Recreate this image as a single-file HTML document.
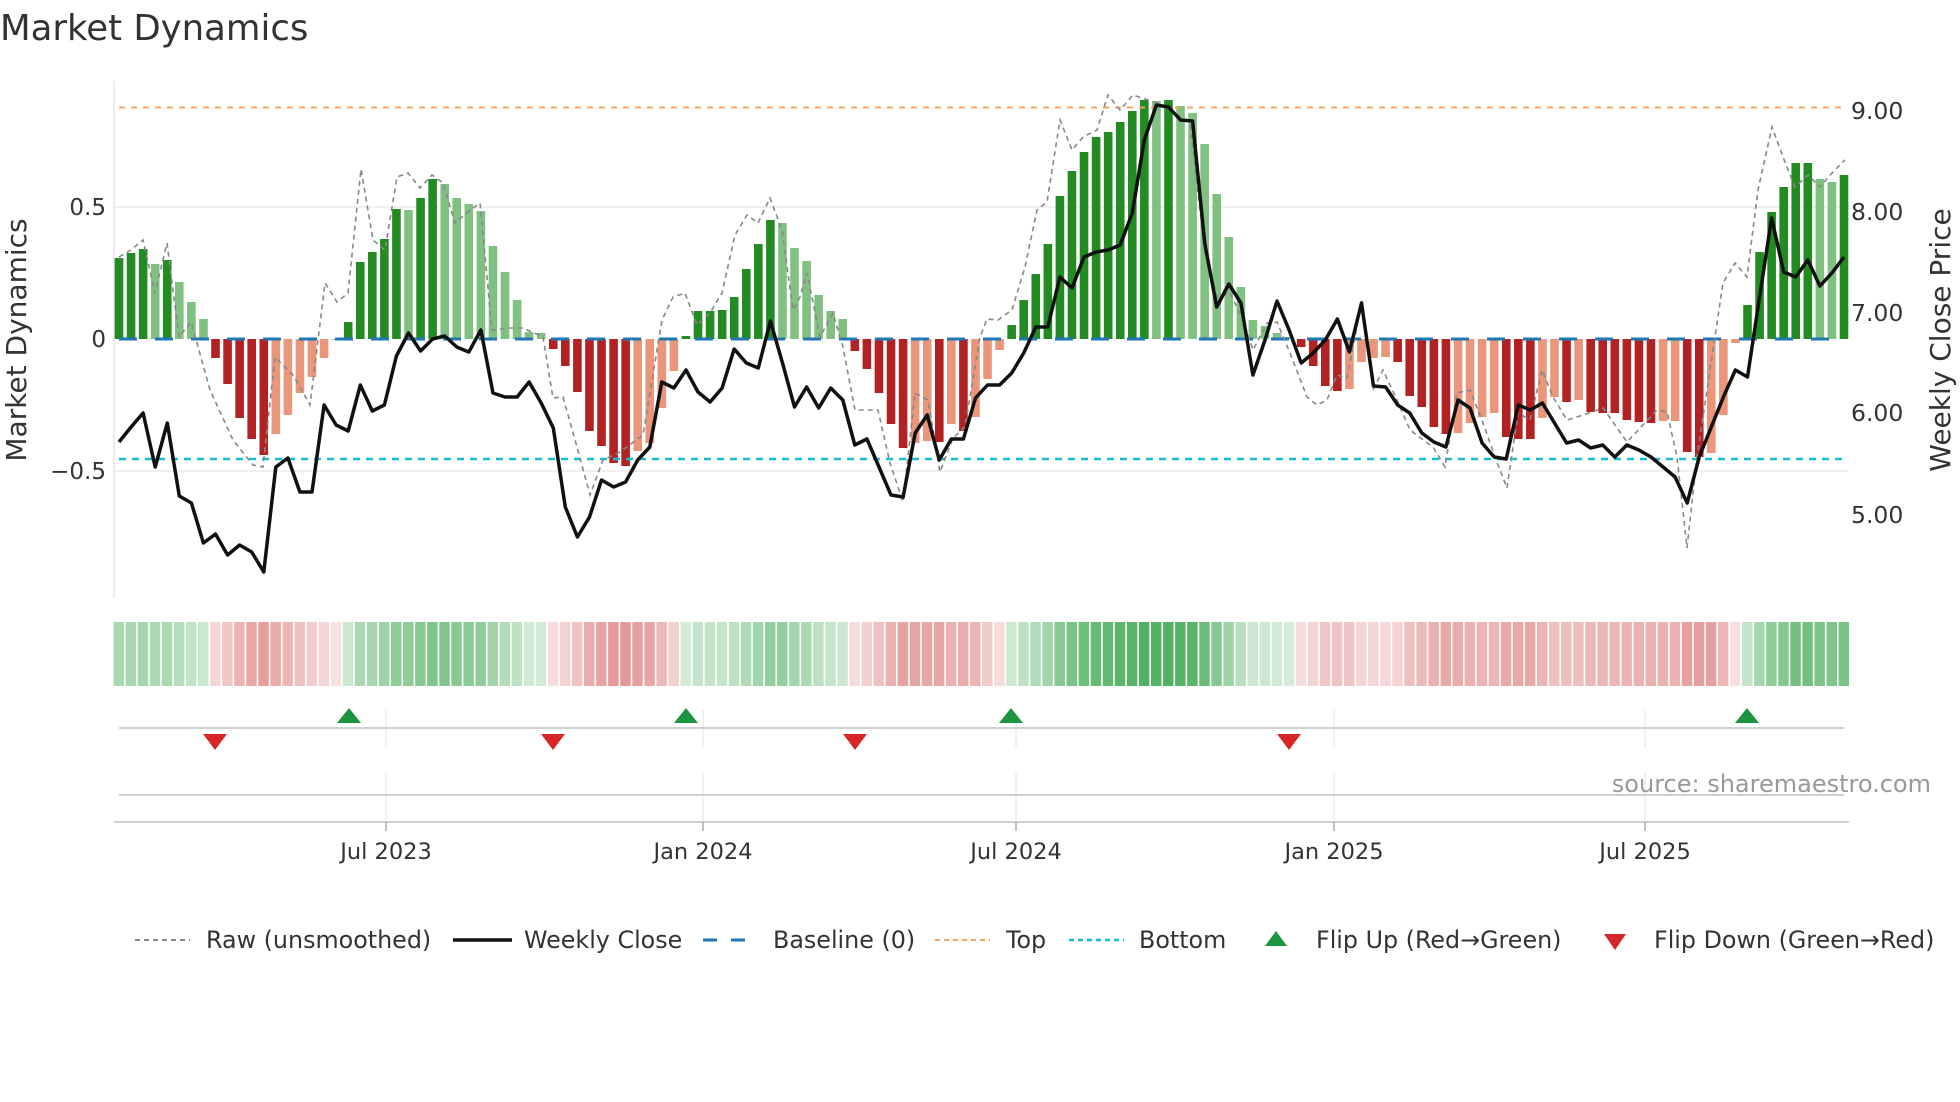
<!DOCTYPE html>
<html><head><meta charset="utf-8">
<style>
html,body{margin:0;padding:0;background:#fff;}
svg{display:block;font-family:"DejaVu Sans","Liberation Sans",sans-serif;}
</style></head>
<body>
<svg id="s" width="1960" height="1102" viewBox="0 0 1960 1102" xmlns="http://www.w3.org/2000/svg">
<rect width="1960" height="1102" fill="#fff"/>
<text x="0" y="40" font-size="35.5" fill="#333">Market Dynamics</text>
<line x1="114" y1="207" x2="1849" y2="207" stroke="#ebebeb" stroke-width="1.5"/>
<line x1="114" y1="471" x2="1849" y2="471" stroke="#ebebeb" stroke-width="1.5"/>
<line x1="114" y1="81" x2="114" y2="598" stroke="#e6e6e6" stroke-width="1.5"/>
<g id="bars"></g>
<line x1="119" y1="339" x2="1846" y2="339" stroke="#1f77b4" stroke-width="3" stroke-dasharray="18,18"/>
<line x1="119" y1="107.5" x2="1846" y2="107.5" stroke="#f4a461" stroke-width="2" stroke-dasharray="6,6"/>
<line x1="119" y1="459" x2="1846" y2="459" stroke="#17becf" stroke-width="2.5" stroke-dasharray="7,6"/>
<polyline id="raw" fill="none" stroke="#888" stroke-width="1.6" stroke-dasharray="5,4"/>
<polyline id="price" fill="none" stroke="#111" stroke-width="3.5" stroke-linejoin="round"/>
<g font-size="23" fill="#333" text-anchor="end">
<text x="106" y="215">0.5</text>
<text x="106" y="347">0</text>
<text x="106" y="479">−0.5</text>
</g>
<g font-size="23.5" fill="#333">
<text x="1851" y="119">9.00</text>
<text x="1851" y="220">8.00</text>
<text x="1851" y="321">7.00</text>
<text x="1851" y="421">6.00</text>
<text x="1851" y="523">5.00</text>
</g>
<text transform="translate(26,340) rotate(-90)" font-size="28" fill="#333" text-anchor="middle">Market Dynamics</text>
<text transform="translate(1950,340) rotate(-90)" font-size="28" fill="#333" text-anchor="middle">Weekly Close Price</text>
<g id="heat"></g>
<g stroke="#ececec" stroke-width="1.5">
<line x1="386" y1="710" x2="386" y2="748"/><line x1="703" y1="710" x2="703" y2="748"/><line x1="1016" y1="710" x2="1016" y2="748"/><line x1="1334" y1="710" x2="1334" y2="748"/><line x1="1645" y1="710" x2="1645" y2="748"/>
<line x1="386" y1="772" x2="386" y2="822"/><line x1="703" y1="772" x2="703" y2="822"/><line x1="1016" y1="772" x2="1016" y2="822"/><line x1="1334" y1="772" x2="1334" y2="822"/><line x1="1645" y1="772" x2="1645" y2="822"/>
</g>
<line x1="119" y1="728" x2="1844" y2="728" stroke="#d0d0d0" stroke-width="2"/>
<line x1="119" y1="795" x2="1844" y2="795" stroke="#d0d0d0" stroke-width="2"/>
<line x1="114" y1="822" x2="1849" y2="822" stroke="#cfcfcf" stroke-width="2"/>
<g stroke="#aaa" stroke-width="1.5">
<line x1="386" y1="822" x2="386" y2="831"/><line x1="703" y1="822" x2="703" y2="831"/><line x1="1016" y1="822" x2="1016" y2="831"/><line x1="1334" y1="822" x2="1334" y2="831"/><line x1="1645" y1="822" x2="1645" y2="831"/>
</g>
<g id="flips"></g>
<text x="1931" y="792" font-size="24" fill="#999" text-anchor="end">source: sharemaestro.com</text>
<g font-size="22.5" fill="#333" text-anchor="middle">
<text x="386" y="859">Jul 2023</text>
<text x="703" y="859">Jan 2024</text>
<text x="1016" y="859">Jul 2024</text>
<text x="1334" y="859">Jan 2025</text>
<text x="1645" y="859">Jul 2025</text>
</g>
<line x1="135" y1="940" x2="190" y2="940" stroke="#888" stroke-width="2" stroke-dasharray="5,4"/>
<line x1="453" y1="940" x2="512" y2="940" stroke="#111" stroke-width="3.5"/>
<line x1="703" y1="940" x2="758" y2="940" stroke="#1f77b4" stroke-width="3" stroke-dasharray="14,14"/>
<line x1="935" y1="940" x2="990" y2="940" stroke="#f4a461" stroke-width="2" stroke-dasharray="5,4"/>
<line x1="1069" y1="940" x2="1124" y2="940" stroke="#17becf" stroke-width="2.5" stroke-dasharray="5,4"/>
<polygon points="1265,946 1287,946 1276,931" fill="#1a9641"/>
<polygon points="1604,934 1626,934 1615,950" fill="#d62728"/>
<g font-size="23.8" fill="#333">
<text x="206" y="948">Raw (unsmoothed)</text>
<text x="524" y="948">Weekly Close</text>
<text x="773" y="948">Baseline (0)</text>
<text x="1006" y="948">Top</text>
<text x="1139" y="948">Bottom</text>
<text x="1316" y="948">Flip Up (Red→Green)</text>
<text x="1654" y="948">Flip Down (Green→Red)</text>
</g>
</svg>
<script>
var NS="http://www.w3.org/2000/svg";
function el(t,a,p){var e=document.createElementNS(NS,t);for(var k in a)e.setAttribute(k,a[k]);p.appendChild(e);return e;}
var D="g81 g86 g90 l75 g79 l57 l37 l20 r-19 r-45 r-79 r-100 r-116 s-95 s-76 s-54 s-38 s-19 s-1 g17 g77 g87 g100 g130 l129 g141 g160 l155 l141 l135 l128 l93 l67 l39 l7 l6 r-10 r-27 r-53 r-92 r-107 r-124 r-127 s-112 s-104 s-69 s-32 g3 g28 g28 g29 g42 g70 g95 g119 l116 l91 l78 l44 l28 l20 r-12 r-30 r-54 r-85 r-109 s-104 s-102 r-103 s-85 r-92 s-78 s-40 s-11 g14 g39 g65 g95 g143 g168 g187 g202 g207 g217 g228 g239 l238 g239 l233 l226 l195 l145 l102 l52 l19 l13 l6 l2 r-8 r-27 r-47 r-52 s-50 s-23 s-19 s-18 r-23 r-57 r-68 r-88 r-95 s-94 s-84 s-78 s-74 r-98 r-100 r-100 s-79 s-58 r-63 s-61 r-73 r-74 r-74 r-81 r-83 r-84 s-82 s-82 r-113 r-118 s-114 s-76 s-4 g34 g87 g127 g152 g176 g176 l160 l157 g164".split(" ");
var P=[442,427,413,467,423,496,503,543,534,555,545,552,572,467,458,492,492,405,425,431,385,411,405,356,333,351,339,336,347,352,330,393,397,397,382,403,428,507,537,517,480,487,482,460,447,382,388,370,392,402,388,349,363,368,321,363,407,387,408,388,400,445,439,467,495,497,433,415,460,439,439,398,385,385,373,353,327,327,277,288,257,252,250,245,213,140,105,107,120,121,243,307,284,303,375,340,301,330,363,353,340,319,352,303,386,387,405,413,433,442,447,400,408,443,457,459,405,410,403,423,443,440,448,445,457,445,450,457,467,477,503,457,427,397,370,377,297,218,272,277,260,286,273,257];
var R=[119,257,131,250,143,240,155,293,167,243,179,337,191,322,197,343,210,390,233,440,253,465,263,467,275,357,293,375,310,405,325,283,337,302,348,293,361,169,373,240,385,250,397,177,408,173,420,188,432,175,443,183,455,223,468,212,480,203,492,330,510,328,523,328,543,337,553,398,563,397,577,447,590,495,603,460,620,452,643,435,662,320,673,297,685,293,697,325,710,313,722,293,735,235,747,215,758,223,770,198,782,230,793,310,800,297,807,273,820,337,833,313,843,347,855,410,878,410,890,463,903,502,915,393,928,400,940,472,953,438,965,427,980,337,987,319,998,320,1012,310,1025,267,1037,210,1047,202,1060,120,1072,150,1083,137,1097,130,1108,95,1120,110,1133,95,1157,103,1170,110,1190,123,1205,253,1217,297,1230,293,1243,320,1253,350,1267,323,1277,322,1290,353,1307,397,1317,405,1327,400,1337,375,1347,378,1362,300,1373,390,1383,370,1397,400,1410,430,1433,447,1445,467,1457,393,1470,390,1483,423,1495,457,1507,488,1518,413,1530,420,1542,370,1553,397,1567,420,1580,416,1603,408,1627,442,1657,410,1667,412,1677,457,1687,548,1697,457,1710,370,1723,283,1735,263,1747,277,1758,190,1772,127,1783,157,1795,187,1808,175,1820,187,1832,173,1845,160];
var col={g:"#228b22",l:"#80c080",r:"#b22222",s:"#e9967a"};
var bars=document.getElementById("bars"),heat=document.getElementById("heat");
var step=(1844-119)/143,w=8.6;
var pp=[];
for(var i=0;i<D.length;i++){
 var t=D[i][0],v=parseFloat(D[i].slice(1));var x=119+i*step;
 var y=v>=0?339-v:339,h=Math.abs(v);
 if(h>0.5)el("rect",{x:(x-w/2).toFixed(2),y:y,width:w,height:h,fill:col[t]},bars);
 var a,c;
 if(v>=0){a=0.2+0.62*Math.min(1,v/239);c="rgba(44,160,64,"+a.toFixed(3)+")";}
 else{a=0.15+0.38*Math.min(1,-v/127);c="rgba(205,60,60,"+a.toFixed(3)+")";}
 el("rect",{x:(x-step/2+0.6).toFixed(2),y:622,width:(step-1.6).toFixed(2),height:64,fill:c},heat);
 pp.push(x.toFixed(1)+","+P[i]);
}
document.getElementById("price").setAttribute("points",pp.join(" "));
var rp=[];for(var j=0;j<R.length;j+=2)rp.push(R[j]+","+R[j+1]);
document.getElementById("raw").setAttribute("points",rp.join(" "));
var fl=document.getElementById("flips");
[349,686,1011,1747].forEach(function(x){el("polygon",{points:(x-12)+",723 "+(x+12)+",723 "+x+",708",fill:"#1a9641"},fl);});
[215,553,855,1289].forEach(function(x){el("polygon",{points:(x-12)+",734 "+(x+12)+",734 "+x+",750",fill:"#d62728"},fl);});
</script>
</body></html>
